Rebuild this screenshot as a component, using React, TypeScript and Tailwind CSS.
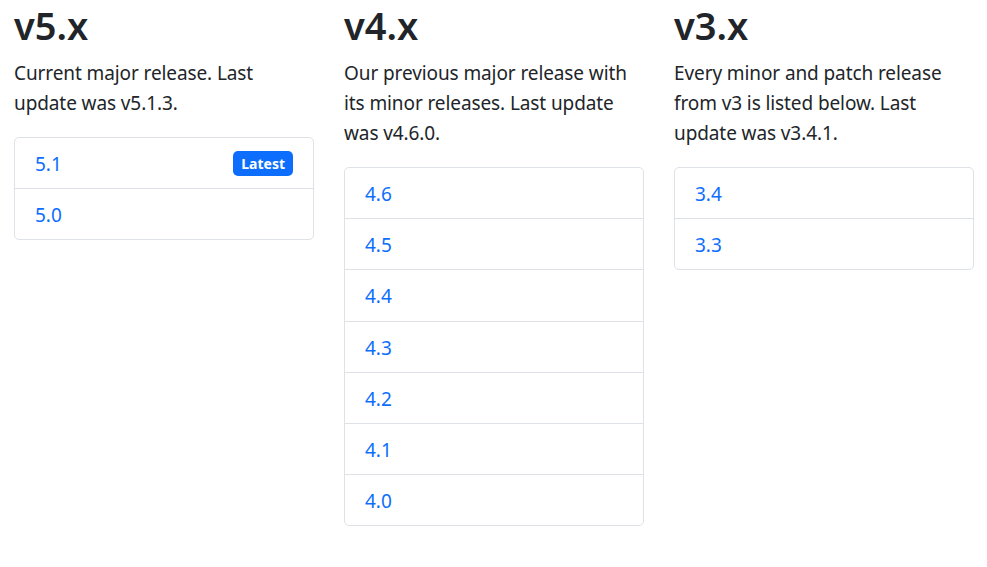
import React from "react";

interface Release {
  title: string;
  lead: string;
  versions: string[];
  latest?: string;
}

const releases: Release[] = [
  {
    title: "v5.x",
    lead: "Current major release. Last update was v5.1.3.",
    versions: ["5.1", "5.0"],
    latest: "5.1",
  },
  {
    title: "v4.x",
    lead: "Our previous major release with its minor releases. Last update was v4.6.0.",
    versions: ["4.6", "4.5", "4.4", "4.3", "4.2", "4.1", "4.0"],
  },
  {
    title: "v3.x",
    lead: "Every minor and patch release from v3 is listed below. Last update was v3.4.1.",
    versions: ["3.4", "3.3"],
  },
];

function ReleaseColumn({ release }: { release: Release }) {
  return (
    <div className="w-[300px] flex-shrink-0">
      <h2 className="text-[38px] leading-[48px] font-semibold text-[#212529] mb-[10px] pt-[1px]">
        {release.title}
      </h2>
      <p className="text-[19px] leading-[30px] tracking-[-0.1px] text-[#212529] mb-[19px] -mt-[1px]">
        {release.lead}
      </p>
      <div className="border border-[#dee2e6] rounded-[5px] divide-y divide-[#dee2e6]">
        {release.versions.map((v) => (
          <div key={v} className="px-[20px] pt-[11px] pb-[9.2px] flex items-center justify-between">
            <a href="#" className="text-[19px] leading-[30px] text-[#0d6efd]">
              {v}
            </a>
            {release.latest === v && (
              <span className="bg-[#0d6efd] text-white text-[14px] leading-[15px] font-bold px-[8px] py-[5px] rounded-[5px] -mt-[2px]">
                Latest
              </span>
            )}
          </div>
        ))}
      </div>
    </div>
  );
}

export default function App() {
  return (
    <div
      className="min-h-screen bg-white pl-[14px] flex gap-[30px]"
      style={{ fontFamily: '"Segoe UI", "Noto Sans", sans-serif' }}
    >
      {releases.map((r) => (
        <ReleaseColumn key={r.title} release={r} />
      ))}
    </div>
  );
}
